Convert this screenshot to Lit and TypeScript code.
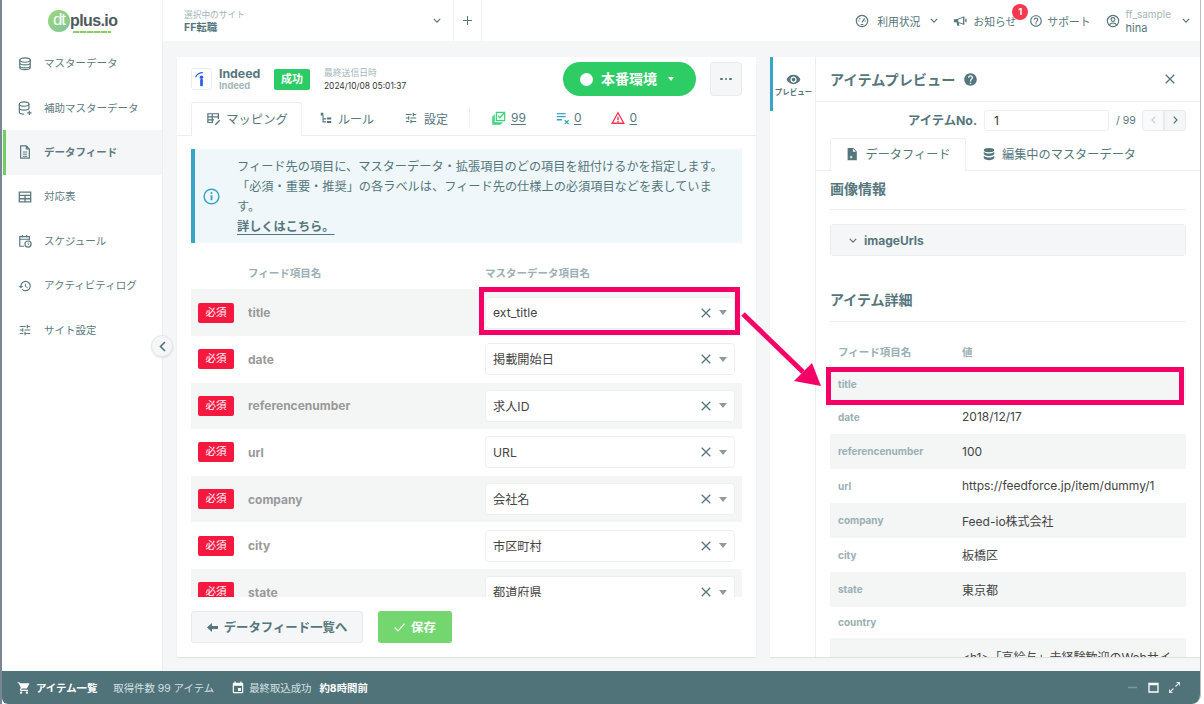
import { LitElement, html, css } from "lit";
import { customElement } from "lit/decorators.js";

const I = {
  db: html`<svg class="i" viewBox="0 0 16 16" fill="none" stroke="currentColor" stroke-width="1.400"><ellipse cx="8" cy="3.500" rx="6" ry="2.500"/><path d="M2 3.500v9c0 1.400 2.700 2.500 6 2.500s6-1.100 6-2.500v-9M2 7c0 1.400 2.700 2.500 6 2.500S14 8.400 14 7M2 10.500c0 1.400 2.700 2.500 6 2.500s6-1.100 6-2.500" transform="translate(0 -.5)"/></svg>`,
  dbp: html`<svg class="i" viewBox="0 0 16 16" fill="none" stroke="currentColor" stroke-width="1.400"><ellipse cx="7" cy="3.500" rx="5.500" ry="2.500"/><path d="M1.500 3.500v9c0 1.300 2.500 2.400 5.500 2.400M12.500 3.500v5M1.500 8c0 1.300 2.500 2.400 5.500 2.400s5.500-1.100 5.500-2.400M13 11v5M10.500 13.500h5"/></svg>`,
  doc: html`<svg class="i" viewBox="0 0 16 16" fill="none" stroke="currentColor" stroke-width="1.400"><path d="M3 1h6.500L13 4.500V15H3zM9.500 1v3.500H13"/><path d="M5.500 8h5M5.500 10.500h5M5.500 13h5" stroke-width="1.100"/></svg>`,
  table: html`<svg class="i" viewBox="0 0 16 16" fill="none" stroke="currentColor" stroke-width="1.500"><path d="M1.500 2.500h13v11h-13zM1.500 6.200h13M1.500 10h13M8 6.200v7.300"/></svg>`,
  sched: html`<svg class="i" viewBox="0 0 16 16" fill="none" stroke="currentColor" stroke-width="1.400"><path d="M7 14H2V3h11v4M2 6h11M5 1v3M10 1v3"/><circle cx="11.500" cy="11.500" r="3.500"/><path d="M11.500 9.800v1.900l1.200.8" stroke-width="1"/></svg>`,
  hist: html`<svg class="i" viewBox="0 0 24 24" fill="currentColor"><path d="M13 3a9 9 0 0 0-9 9H1l3.890 3.890.07.14L9 12H6c0-3.870 3.130-7 7-7s7 3.130 7 7-3.130 7-7 7c-1.930 0-3.680-.79-4.940-2.060l-1.420 1.420A8.954 8.954 0 0 0 13 21a9 9 0 0 0 0-18zm-1 5v5l4.280 2.540.72-1.210-3.500-2.080V8H12z"/></svg>`,
  tune: html`<svg class="i" viewBox="0 0 24 24" fill="currentColor"><path d="M3 17v2h6v-2H3zM3 5v2h10V5H3zm10 16v-2h8v-2h-8v-2h-2v6h2zM7 9v2H3v2h4v2h2V9H7zm14 4v-2H11v2h10zm-6-4h2V7h4V5h-4V3h-2v6z"/></svg>`,
  gauge: html`<svg class="i" viewBox="0 0 16 16" fill="none" stroke="currentColor" stroke-width="1.300"><circle cx="8" cy="8" r="6.500"/><path d="M8 9.500 11 5M3.500 8h1.500M11 8h1.500M5 5l1 1M6.500 12h3"/></svg>`,
  mega: html`<svg class="i" viewBox="0 0 16 16" fill="currentColor"><path d="M1 6h3l9-3.500v10L4 9.500H1zM14 5.500h1.500v4H14zM4 10h2.500l.8 3.500H5z"/><path d="M6 6.300l5.500-2v6.600L6 9z" fill="#fff"/></svg>`,
  help: html`<svg class="i" viewBox="0 0 24 24" fill="currentColor"><path d="M11 18h2v-2h-2v2zm1-16C6.480 2 2 6.480 2 12s4.480 10 10 10 10-4.480 10-10S17.520 2 12 2zm0 18c-4.410 0-8-3.590-8-8s3.590-8 8-8 8 3.590 8 8-3.590 8-8 8zm0-14c-2.210 0-4 1.790-4 4h2c0-1.100.9-2 2-2s2 .9 2 2c0 2-3 1.750-3 5h2c0-2.250 3-2.500 3-5 0-2.210-1.790-4-4-4z"/></svg>`,
  user: html`<svg class="i" viewBox="0 0 16 16" fill="none" stroke="currentColor" stroke-width="1.300"><circle cx="8" cy="8" r="6.500"/><circle cx="8" cy="6.300" r="2.200"/><path d="M3.800 12.600c1-1.800 2.500-2.300 4.200-2.300s3.200.5 4.200 2.300"/></svg>`,
  chev: html`<svg class="chev" viewBox="0 0 10 6" fill="none" stroke="currentColor" stroke-width="1.500"><path d="M1 1l4 4 4-4"/></svg>`,
  map: html`<svg class="i" viewBox="0 0 16 16" fill="none" stroke="currentColor" stroke-width="1.400"><path d="M13 8V2H1v10h6M1 5.500h12M1 9h7M6 2v10"/><path d="M9.500 14.500l5-5" stroke-width="1.600"/></svg>`,
  rule: html`<svg class="i" viewBox="0 0 16 16" fill="currentColor"><path d="M2 2h3v3H2zM4 5h1.300v3.300H8v1.300H5.300v2.100H8V13H4zM9 7.500h5v2.300H9zM9 11.500h5v2.300H9z"/></svg>`,
  ok: html`<svg class="i" viewBox="0 0 16 16" fill="none" stroke="#3ed47a" stroke-width="1.400"><path d="M5 1.500h9.500V11H5zM2.500 4v9.500H12M1 6v9h9"/><path d="M7 5.500l2 2.200 4.500-5.200" stroke-width="1.600"/></svg>`,
  lines: html`<svg class="i" viewBox="0 0 16 16" fill="none" stroke="#3aa4c8" stroke-width="1.500"><path d="M1 3h10M1 6.500h10M1 10h6M10 10.500l4.500 4.500M14.500 10.500 10 15"/></svg>`,
  warn: html`<svg class="i" viewBox="0 0 16 16" fill="none" stroke="#f5314f" stroke-width="1.500"><path d="M8 2 1.300 14h13.400z"/><path d="M8 6.500v4M8 11.500v1.500" stroke-width="1.600"/></svg>`,
  info: html`<svg viewBox="0 0 18 18" class="infoi" fill="none" stroke="#3aa4c8" stroke-width="1.600"><circle cx="9" cy="9" r="7.800"/><path d="M9 7.800v5.200" stroke-width="2"/><circle cx="9" cy="5.300" r="1.100" fill="#3aa4c8" stroke="none"/></svg>`,
  x: html`<svg class="x" viewBox="0 0 10 10" fill="none" stroke="currentColor" stroke-width="1.300"><path d="M.7.700l8.600 8.600M9.300.7.700 9.300"/></svg>`,
  eye: html`<svg class="eye" viewBox="0 0 24 24" fill="currentColor"><path d="M12 4.500C7 4.500 2.730 7.610 1 12c1.730 4.390 6 7.500 11 7.500s9.270-3.110 11-7.500c-1.730-4.390-6-7.500-11-7.500zM12 17c-2.760 0-5-2.240-5-5s2.240-5 5-5 5 2.240 5 5-2.240 5-5 5zm0-8c-1.660 0-3 1.340-3 3s1.340 3 3 3 3-1.340 3-3-1.340-3-3-3z"/></svg>`,
  helpf: html`<svg class="helpf" viewBox="0 0 24 24" fill="currentColor"><path d="M12 2C6.480 2 2 6.480 2 12s4.480 10 10 10 10-4.480 10-10S17.520 2 12 2zm1 17h-2v-2h2v2zm2.070-7.750-.9.920C13.450 12.900 13 13.500 13 15h-2v-.5c0-1.100.45-2.100 1.170-2.830l1.240-1.260c.37-.36.59-.86.590-1.410 0-1.100-.9-2-2-2s-2 .9-2 2H8c0-2.210 1.790-4 4-4s4 1.790 4 4c0 .88-.36 1.680-.93 2.250z"/></svg>`,
  file: html`<svg class="i" viewBox="0 0 16 16" fill="currentColor"><path d="M3 1h6.500L13.500 5v10H3zM9 2v3.500h3.500z" fill-rule="evenodd"/><path d="M5.500 11.500h3M7 10v3" stroke="#fff" stroke-width="1"/></svg>`,
  dbf: html`<svg class="i" viewBox="0 0 16 16" fill="currentColor"><ellipse cx="8" cy="3.500" rx="6" ry="2.500"/><path d="M2 5.500c1 1.400 3.500 2 6 2s5-.6 6-2V8c-.6 1.500-3.300 2.200-6 2.200S2.600 9.500 2 8zM2 10c1 1.400 3.500 2 6 2s5-.6 6-2v2.500c-.6 1.500-3.300 2.500-6 2.500s-5.400-1-6-2.500z"/></svg>`,
  cart: html`<svg class="cart" viewBox="0 0 24 24" fill="currentColor"><path d="M7 18c-1.100 0-1.990.9-1.990 2S5.900 22 7 22s2-.9 2-2-.9-2-2-2zM1 2v2h2l3.600 7.590-1.350 2.450c-.16.280-.25.610-.25.960 0 1.100.9 2 2 2h12v-2H7.420c-.14 0-.25-.11-.25-.25l.03-.12.9-1.630h7.450c.75 0 1.410-.41 1.750-1.030l3.580-6.490A1 1 0 0 0 20.010 4H5.210l-.94-2H1zm16 16c-1.100 0-1.990.9-1.990 2s.89 2 1.990 2 2-.9 2-2-.9-2-2-2z"/></svg>`,
  cal: html`<svg class="cart" viewBox="0 0 24 24" fill="currentColor"><path d="M17 12h-5v5h5v-5zM16 1v2H8V1H6v2H5c-1.110 0-1.990.9-1.990 2L3 19a2 2 0 0 0 2 2h14c1.100 0 2-.9 2-2V5c0-1.100-.9-2-2-2h-1V1h-2zm3 18H5V8h14v11z"/></svg>`,
};

const maps = [
  ["title", "ext_title"], ["date", "掲載開始日"], ["referencenumber", "求人ID"], ["url", "URL"],
  ["company", "会社名"], ["city", "市区町村"], ["state", "都道府県"],
];
const details = [
  ["title", ""], ["date", "2018/12/17"], ["referencenumber", "100"], ["url", "https://feedforce.jp/item/dummy/1"],
  ["company", "Feed-io株式会社"], ["city", "板橋区"], ["state", "東京都"], ["country", ""],
];
const nav = [
  [I.db, "マスターデータ"], [I.dbp, "補助マスターデータ"], [I.doc, "データフィード"], [I.table, "対応表"],
  [I.sched, "スケジュール"], [I.hist, "アクティビティログ"], [I.tune, "サイト設定"],
] as const;

@customElement("app-root")
export class AppRoot extends LitElement {
  static styles = css`
    :host { display: block; width: 1204px; height: 704px; background: #fff; overflow: hidden; position: relative;
      font-family: Inter, "Noto Sans CJK JP", sans-serif; color: #55767c; font-size: 12px; }
    * { box-sizing: border-box; }
    .frame { margin-left: 2px; width: 1199px; height: 704px; display: flex; flex-direction: column; overflow: hidden;
      border-right: 1px solid #b9bdc0; border-bottom-right-radius: 9px; border-bottom-left-radius: 6px; position: relative; }
    .edge { position: absolute; left: 0; top: 0; width: 2px; height: 704px; background: #7a8494; }
    .top { display: flex; height: 671px; }
    .side { width: 161px; flex: none; background: #fff; border-right: 1px solid #eceff1; position: relative; }
    .logo { height: 41.500px; display: flex; align-items: flex-start; padding: 10px 0 0 46px; position: relative; }
    .dot { width: 22px; height: 22px; border-radius: 50%; background: linear-gradient(135deg, #9cd873, #7fc4a0); color: #fff; font: 400 17px/20px "Liberation Sans", sans-serif; text-align: center; letter-spacing: -1px; flex: none; }
    .pl { font: 700 16px/22px "Liberation Sans", sans-serif; letter-spacing: -.6px; color: #4f5a5c; position: relative; }
    .pl i { position: absolute; left: 3px; right: 6px; bottom: -1px; height: 2px; background: repeating-linear-gradient(90deg, #8ccc5c 0 6px, #c5e6ae 6px 7px); }
    .item { height: 44.400px; display: flex; align-items: center; gap: 12px; padding-left: 16px; font-size: 10.500px; color: #5c7a80; position: relative; }
    .item span { margin-top: -2px; }
    .item.on { background: #f4f6f8; font-weight: 700; }
    .item.on::before { content: ""; position: absolute; left: 1px; top: 0; bottom: 0; width: 3px; background: #6ed05f; }
    .i { width: 14px; height: 14px; flex: none; display: block; }
    .collapse { position: absolute; left: 149px; top: 335px; width: 22px; height: 22px; border-radius: 50%; background: #f4f6f8; border: 1px solid #e4e8ea; box-shadow: 0 1px 2px rgba(0,0,0,.1); display: flex; align-items: center; justify-content: center; color: #50737a; z-index: 3; }
    .collapse svg { width: 7px; height: 11px; }
    .main { flex: 1; display: flex; flex-direction: column; background: #f4f6f8; min-width: 0; }
    .hdr { height: 41px; background: #fff; display: flex; align-items: stretch; font-size: 10.800px; flex: none; }
    .site { width: 291px; padding: 10px 0 0 21px; position: relative; border-right: 1px solid #f0f2f4; }
    .site small { display: block; font-size: 8.700px; line-height: 10px; color: #a3b6ba; }
    .site b { display: block; font-size: 10.500px; line-height: 14px; color: #55767c; margin-top: 1px; }
    .site .chev { position: absolute; right: 12px; top: 18px; }
    .chev { width: 8px; height: 5px; flex: none; display: block; }
    .plus { width: 28px; border-right: 1px solid #f0f2f4; position: relative; }
    .plus::before { content: ""; position: absolute; left: 9px; top: 20px; width: 9px; height: 1.300px; background: #55767c; }
    .plus::after { content: ""; position: absolute; left: 13px; top: 16px; width: 1.300px; height: 9px; background: #55767c; }
    .hr { margin-left: auto; display: flex; align-items: center; padding-right: 10px; }
    .hi { display: flex; align-items: center; gap: 6px; position: relative; }
    .badge { position: absolute; left: 59px; top: -9px; width: 16px; height: 16px; border-radius: 50%; background: #f5384f; color: #fff; font-weight: 700; font-size: 9.500px; line-height: 16px; text-align: center; }
    .who { line-height: 14px; margin-left: -1px; }
    .who small { display: block; font-size: 10px; color: #a3b6ba; }
    .who b { display: block; font-size: 11px; font-weight: 400; color: #55767c; }
    .content { flex: 1; display: flex; gap: 14px; padding: 16px 0 14px 14px; min-height: 0; }
    .card { width: 579px; background: #fff; display: flex; flex-direction: column; box-shadow: 0 1px 1px rgba(0,0,0,.08); flex: none; }
    .chead { height: 45px; padding: 5px 14px 0; display: flex; align-items: flex-start; flex: none; }
    .ilogo { width: 21px; height: 22px; margin-top: 6px; border: 1px solid #e8eef8; border-radius: 3px; flex: none; }
    .ilogo svg { display: block; width: 100%; height: 100%; }
    .nm { margin: 5px 0 0 7px; width: 55px; }
    .nm b { display: block; font-size: 12.300px; line-height: 14px; }
    .nm small { display: block; font-size: 9.300px; line-height: 10px; color: #a3b6ba; font-weight: 700; }
    .ok { width: 36px; height: 21px; margin-top: 7px; background: #2bcb65; color: #fff; font-weight: 700; font-size: 11px; line-height: 21px; text-align: center; border-radius: 2px; flex: none; }
    .sent { margin: 5px 0 0 14px; }
    .sent small { display: block; font-size: 8.800px; line-height: 12px; color: #a3b6ba; }
    .sent span { display: block; font-size: 8.400px; line-height: 14px; color: #333; white-space: nowrap; }
    .env { margin-left: auto; width: 133px; height: 34px; border-radius: 17px; background: #2ecc65; color: #fff; font-weight: 700; font-size: 14px; line-height: 33px; display: flex; align-items: flex-start; padding-left: 17px; flex: none; }
    .env i { width: 13px; height: 13px; border-radius: 50%; background: #fff; margin: 11px 8px 0 0; flex: none; }
    .car { width: 0; height: 0; border-left: 4px solid transparent; border-right: 4px solid transparent; border-top: 5px solid currentColor; flex: none; }
    .env .car { margin: 15px 0 0 11px; border-width: 4px 3.500px 0; border-left-color: transparent; border-right-color: transparent; }
    .more { margin-left: 14px; width: 32px; height: 34px; background: #f4f6f8; border: 1px solid #e8ebee; border-radius: 4px; display: flex; align-items: center; justify-content: center; gap: 2px; flex: none; }
    .more i { width: 2.500px; height: 2.500px; border-radius: 50%; background: #50737a; }
    .tabs { height: 34px; display: flex; align-items: stretch; padding-left: 14px; border-bottom: 1px solid #eceef0; flex: none; position: relative; font-size: 12px; }
    .tab { display: flex; align-items: center; gap: 6px; white-space: nowrap; border: 1px solid transparent; border-bottom: 0; padding-bottom: 2px; }
    .tab.on { background: #fff; border-color: #eceef0; border-radius: 3px 3px 0 0; height: 34px; }
    .tabs.a .tab { gap: 5px; }
    .tabs.a .t1 { width: 111px; justify-content: center; font-size: 12.300px; padding-left: 2px; }
    .tabs.a .t2 { margin-left: 16px; width: 85px; }
    .tabs.a .t3 { width: 66px; gap: 6px; }
    .tsep { width: 1px; height: 20px; background: #eceef0; margin-top: 6px; }
    .st { display: flex; align-items: center; gap: 5px; padding-bottom: 2px; font-size: 12px; }
    .st u { text-underline-offset: 2px; }
    .st1 { margin-left: 22px; } .st2 { margin-left: 30px; gap: 4px; } .st3 { margin-left: 30px; gap: 4px; }
    .body { flex: 1; overflow: hidden; padding: 13px 14px 0; min-height: 0; }
    .note { height: 94px; background: #eff7fa; border-left: 4px solid #3aa4c8; display: flex; align-items: center; padding-left: 8px; font-size: 12.200px; line-height: 19.800px; }
    .infoi { width: 17px; height: 17px; flex: none; margin-right: 17px; }
    .note div { padding-top: 2px; }
    .note u { font-weight: 700; text-underline-offset: 3px; }
    .thead { height: 46.400px; padding: 23px 0 0 57px; display: flex; font-weight: 700; font-size: 10.500px; color: #9ab0b4; line-height: 15px; }
    .thead span:first-child { width: 237px; }
    .row { height: 46.600px; display: flex; align-items: center; padding-left: 7px; }
    .row.even { background: #f4f6f6; }
    .req { width: 36px; height: 20px; background: #f5193f; color: #fff; font-size: 10.500px; line-height: 20px; text-align: center; border-radius: 2px; flex: none; margin-right: 14px; }
    .rn { width: 237px; font-weight: 700; font-size: 12px; color: #999; flex: none; }
    .sel { width: 250px; height: 32px; background: #fff; border: 1px solid #eceff1; border-radius: 4px; display: flex; align-items: center; padding: 0 7px 0 7px; font-size: 12.200px; color: #444; flex: none; }
    .sel span { flex: 1; }
    .x { width: 10px; height: 10px; color: #55767c; flex: none; }
    .sel .car { margin-left: 8px; color: #8e9a9c; }
    .foot { height: 60px; background: #fff; flex: none; padding: 14px 14px 0; display: flex; gap: 15px; position: relative; }
    .btn { height: 32px; border-radius: 3px; display: flex; align-items: center; justify-content: center; gap: 6px; font-weight: 700; font-size: 12.400px; }
    .back { width: 172px; background: #f4f6f8; border: 1px solid #e6eaee; }
    .back svg { width: 11px; height: 9px; }
    .save { width: 74px; background: #73d66f; color: #fff; }
    .save svg { width: 11px; height: 9px; }
    .prev { flex: 1; background: #fff; display: flex; min-width: 0; box-shadow: 0 1px 1px rgba(0,0,0,.08); }
    .strip { width: 46px; border-right: 1px solid #eceef0; flex: none; }
    .sbtn { height: 54px; border-left: 3px solid #3aa4c8; display: flex; flex-direction: column; align-items: center; padding-top: 15px; font-size: 7.500px; font-weight: 700; line-height: 9px; padding-right: 1px; }
    .eye { width: 15px; height: 15px; margin-bottom: 1px; }
    .pm { flex: 1; min-width: 0; display: flex; flex-direction: column; overflow: hidden; }
    .ph { height: 45px; border-bottom: 1px solid #eceef0; display: flex; align-items: center; padding: 0 25px 0 14px; font-weight: 700; font-size: 14.200px; flex: none; }
    .helpf { width: 15px; height: 15px; margin-left: 8px; }
    .ph .x { margin-left: auto; width: 10px; height: 10px; }
    .no { height: 36px; display: flex; align-items: center; justify-content: flex-end; padding: 0 14px; flex: none; font-size: 10.500px; }
    .no b { font-size: 12.300px; }
    .no span { width: 19px; white-space: nowrap; }
    .inp { width: 125px; height: 21px; border: 1px solid #eceff1; border-radius: 3px; margin: 0 7px; color: #333; font-size: 12px; line-height: 19px; padding-left: 9px; background: #fff; }
    .pg { width: 22px; height: 21px; background: #f4f6f8; border: 1px solid #e8ebee; display: flex; align-items: center; justify-content: center; color: #50737a; }
    .pg.off { color: #c5d0d3; margin-left: 7px; border-radius: 3px 0 0 3px; background: #f9fafb; }
    .pg:last-child { border-radius: 0 3px 3px 0; }
    .pg svg { width: 5px; height: 8px; }
    .tabs.b { height: 33px; padding-left: 14px; font-size: 12.200px; }
    .tabs.b .tab.on { height: 33px; width: 136px; justify-content: center; }
    .tabs.b .tab + .tab { margin-left: 15px; }
    .pb { flex: 1; padding: 0 14px; overflow: hidden; min-height: 0; }
    h3 { margin: 0; height: 39px; border-bottom: 1px solid #eceef0; font-size: 14px; line-height: 36px; font-weight: 700; }
    .acc { margin-top: 14px; height: 32px; background: #f4f6f8; border: 1px solid #eceff1; border-radius: 3px; display: flex; align-items: center; gap: 7px; padding-left: 18px; font-weight: 700; font-size: 12px; }
    .sec2 { margin-top: 32px; height: 34px; line-height: 24px; }
    .dh { height: 46px; display: flex; padding: 23px 0 0 8px; font-weight: 700; font-size: 10.500px; color: #9ab0b4; line-height: 15px; }
    .dh span:first-child { width: 124px; }
    .dr { height: 34.500px; display: flex; align-items: center; padding-left: 8px; }
    .dr.even { background: #f4f6f6; }
    .dr.empty { height: 31.500px; }
    .dr.tall { height: 60px; align-items: flex-start; padding-top: 10px; }
    .dr b { width: 124px; flex: none; font-size: 10px; color: #9ab0b4; }
    .dr span { font-size: 12px; color: #444; white-space: nowrap; }
    .bar { height: 33px; background: #50737a; color: #fff; display: flex; align-items: center; padding-left: 15px; flex: none; font-size: 10.400px; position: relative; }
    .cart { width: 14px; height: 14px; flex: none; }
    .bar b { font-size: 10.400px; margin-left: 5px; }
    .bar span { color: #d5e0e2; }
    .win { margin-left: auto; display: flex; align-items: center; padding-right: 15px; }
    .win div { width: 21px; height: 21px; display: flex; align-items: center; justify-content: center; }
    .win svg { width: 11px; height: 11px; }
    .mark { position: absolute; border: 5px solid #f50066; pointer-events: none; z-index: 5; }
    .arrow { position: absolute; left: 735px; top: 305px; width: 100px; height: 90px; z-index: 5; pointer-events: none; }
  `;

  private hdr() {
    return html`<div class="hdr">
      <div class="site"><small>選択中のサイト</small><b>FF転職</b>${I.chev}</div>
      <div class="plus"></div>
      <div class="hr">
        <div class="hi" style="gap:8px">${I.gauge}<span>利用状況</span></div>
        <div style="margin:0 15px 0 10px">${I.chev}</div>
        <div class="hi">${I.mega}<span>お知らせ</span><div class="badge">1</div></div>
        <div class="hi" style="margin-left:13px;gap:4px">${I.help}<span>サポート</span></div>
        <div class="hi" style="margin-left:15px;gap:7px">${I.user}<div class="who"><small>ff_sample</small><b>hina</b></div></div>
        <div style="margin-left:11px">${I.chev}</div>
      </div>
    </div>`;
  }

  private card() {
    return html`<div class="card">
      <div class="chead">
        <div class="ilogo"><svg viewBox="0 0 21 22"><path d="M4 9c1.500-3.500 4-5 8-5" fill="none" stroke="#2b5bea" stroke-width="1.200"/><circle cx="10.500" cy="9" r="2" fill="#2b5bea"/><rect x="9" y="11" width="3" height="8" rx="1" fill="#2b5bea"/></svg></div>
        <div class="nm"><b>Indeed</b><small>Indeed</small></div>
        <div class="ok">成功</div>
        <div class="sent"><small>最終送信日時</small><span>2024/10/08 05:01:37</span></div>
        <div class="env"><i></i>本番環境<div class="car"></div></div>
        <div class="more"><i></i><i></i><i></i></div>
      </div>
      <div class="tabs a">
        <div class="tab on t1">${I.map}マッピング</div>
        <div class="tab t2">${I.rule}<span>ルール</span></div>
        <div class="tab t3">${I.tune}設定</div>
        <div class="tsep"></div>
        <div class="st st1">${I.ok}<u>99</u></div>
        <div class="st st2">${I.lines}<u>0</u></div>
        <div class="st st3">${I.warn}<u>0</u></div>
      </div>
      <div class="body">
        <div class="note">${I.info}<div>フィード先の項目に、マスターデータ・拡張項目のどの項目を紐付けるかを指定します。<br>「必須・重要・推奨」の各ラベルは、フィード先の仕様上の必須項目などを表していま<br>す。<br><u>詳しくはこちら。</u></div></div>
        <div class="thead"><span>フィード項目名</span><span>マスターデータ項目名</span></div>
        <div>
          ${maps.map(([n, v], k) => html`<div class="row ${k % 2 ? "" : "even"}">
            <div class="req">必須</div><div class="rn">${n}</div>
            <div class="sel"><span>${v}</span>${I.x}<div class="car"></div></div>
          </div>`)}
        </div>
      </div>
      <div class="foot">
        <div class="btn back"><svg viewBox="0 0 11 9" fill="currentColor"><path d="M0 4.500 5 0v3h6v3H5v3z"/></svg>データフィード一覧へ</div>
        <div class="btn save"><svg viewBox="0 0 11 9" fill="none" stroke="currentColor" stroke-width="1.100"><path d="M.7 4.500 4 8 10.500.7"/></svg>保存</div>
      </div>
    </div>`;
  }

  private prev() {
    return html`<div class="prev">
      <div class="strip"><div class="sbtn">${I.eye}プレビュー</div></div>
      <div class="pm">
        <div class="ph">アイテムプレビュー${I.helpf}${I.x}</div>
        <div class="no"><b>アイテムNo.</b><div class="inp">1</div><span>/ 99</span>
          <div class="pg off"><svg viewBox="0 0 5 8" fill="none" stroke="currentColor" stroke-width="1.200"><path d="M4.300.7 1 4l3.300 3.300"/></svg></div>
          <div class="pg"><svg viewBox="0 0 5 8" fill="none" stroke="currentColor" stroke-width="1.200"><path d="M.7.700 4 4 .7 7.300"/></svg></div>
        </div>
        <div class="tabs b">
          <div class="tab on">${I.file}データフィード</div>
          <div class="tab">${I.dbf}編集中のマスターデータ</div>
        </div>
        <div class="pb">
          <h3>画像情報</h3>
          <div class="acc">${I.chev}imageUrls</div>
          <h3 class="sec2">アイテム詳細</h3>
          <div class="dh"><span>フィード項目名</span><span>値</span></div>
          <div>
            ${details.map(([n, v], k) => html`<div class="dr ${k % 2 ? "" : "even"} ${v ? "" : "empty"}"><b>${n}</b><span>${v}</span></div>`)}
            <div class="dr even tall"><b></b><span>&lt;h1&gt;「高給与」未経験歓迎のWebサイ</span></div>
          </div>
        </div>
      </div>
    </div>`;
  }

  render() {
    return html`<div class="edge"></div>
    <div class="frame">
      <div class="top">
        <div class="side">
          <div class="logo"><div class="dot">dt</div><div class="pl">plus.io<i></i></div></div>
          ${nav.map(([ic, t], k) => html`<div class="item ${k === 2 ? "on" : ""}">${ic}<span>${t}</span></div>`)}
          <div class="collapse"><svg viewBox="0 0 7 11" fill="none" stroke="currentColor" stroke-width="1.600"><path d="M6 1 1.500 5.500 6 10"/></svg></div>
        </div>
        <div class="main">
          ${this.hdr()}
          <div class="content">${this.card()}${this.prev()}</div>
        </div>
      </div>
      <div class="bar">
        ${I.cart}<b>アイテム一覧</b><span style="margin-left:16px">取得件数 99 アイテム</span>
        <div style="margin-left:17px;display:flex">${I.cal}</div><span style="margin-left:4px">最終取込成功</span><b style="margin-left:8px">約8時間前</b>
        <div class="win">
          <div><svg viewBox="0 0 11 11" stroke="#7d989d" stroke-width="1.500"><path d="M1 5.500h9"/></svg></div>
          <div><svg viewBox="0 0 11 11" fill="none" stroke="#fff" stroke-width="1.300"><path d="M1 1.500h9v8.500H1zM1 2.500h9"/></svg></div>
          <div><svg viewBox="0 0 11 11" fill="none" stroke="#dfe7e8" stroke-width="1.100"><path d="M6.500 4.500l4-4M7.500.500h3v3M4.500 6.500l-4 4M.5 7.500v3h3"/></svg></div>
        </div>
      </div>
    </div>
    <div class="mark" style="left:479px;top:287px;width:261px;height:48px"></div>
    <div class="mark" style="left:826px;top:367px;width:358px;height:38px"></div>
    <svg class="arrow" viewBox="735 305 100 90"><path d="M743 314 L803 372" stroke="#f50066" stroke-width="5" fill="none"/><path d="M821 386 L794 381 L812 363 Z" fill="#f50066"/></svg>`;
  }
}
